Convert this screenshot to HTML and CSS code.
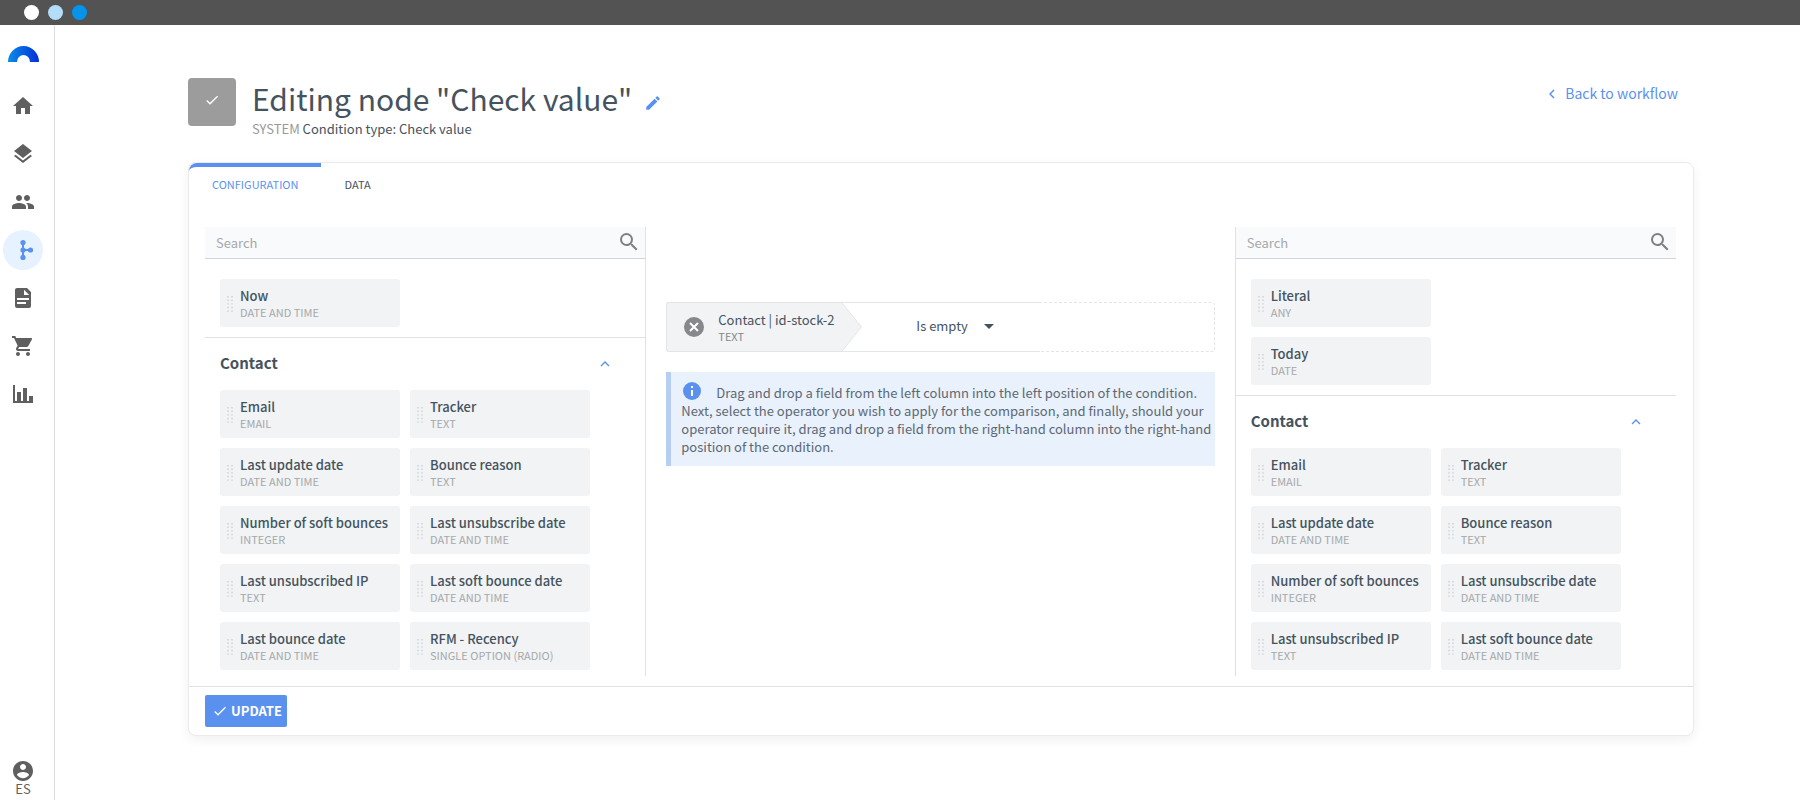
FILE: index.html
```html
<!DOCTYPE html>
<html lang="en">
<head>
<meta charset="utf-8">
<meta name="viewport" content="width=device-width, initial-scale=1">
<title>Editing node "Check value"</title>
<link rel="stylesheet" href="styles.css">
</head>
<body>
<svg class="sprite" aria-hidden="true">
  <symbol id="grip" viewBox="0 0 6 16">
    <path d="M1 0v16M5 0v16" fill="none" stroke="currentColor" stroke-width="1.4" stroke-dasharray="1.4 2.2"/>
  </symbol>
  <symbol id="search" viewBox="0 0 18 18">
    <path fill-rule="evenodd" d="M12.500 11h-.79l-.28-.27A6.470 6.470 0 0 0 13 6.500 6.500 6.500 0 1 0 6.500 13c1.610 0 3.090-.59 4.230-1.570l.27.28v.79l5 4.990L17.490 16l-4.990-5zm-6 0a4.500 4.500 0 1 1 0-9 4.500 4.500 0 0 1 0 9z"/>
  </symbol>
  <symbol id="up" viewBox="0 0 10 6">
    <path d="M1 5l4-4 4 4" fill="none" stroke="currentColor" stroke-width="1.400"/>
  </symbol>
  <symbol id="check" viewBox="0 0 24 24">
    <path d="M9 16.170L4.830 12l-1.420 1.410L9 19 21 7l-1.410-1.410z"/>
  </symbol>
</svg>

<header class="topbar">
  <span class="dot dot-white"></span>
  <span class="dot dot-light"></span>
  <span class="dot dot-blue"></span>
</header>

<div class="shell">
  <nav class="sidebar" aria-label="Main">
    <a class="logo" href="#" aria-label="Start">
      <svg width="31" height="16" viewBox="0 0 31 16">
        <defs><linearGradient id="arc"><stop offset="0" stop-color="#0b8ce9"/><stop offset="1" stop-color="#0330d8"/></linearGradient></defs>
        <path fill="url(#arc)" d="M0 16a15.500 16 0 0 1 31 0h-9a6.500 7 0 0 0-13 0z"/>
      </svg>
    </a>
    <a class="nav-item" href="#" aria-label="Home">
      <svg class="icon" viewBox="0 0 24 24"><path d="M10 20v-6h4v6h5v-8h3L12 3 2 12h3v8z"/></svg>
    </a>
    <a class="nav-item" href="#" aria-label="Layers">
      <svg class="icon" viewBox="0 0 24 24"><path d="M11.990 18.540l-7.370-5.730L3 14.070l9 7 9-7-1.630-1.270-7.380 5.740zM12 16l7.360-5.730L21 9l-9-7-9 7 1.630 1.270L12 16z"/></svg>
    </a>
    <a class="nav-item" href="#" aria-label="Contacts">
      <svg class="icon" viewBox="0 0 24 24"><path d="M16 11c1.660 0 2.990-1.340 2.990-3S17.660 5 16 5s-3 1.340-3 3 1.340 3 3 3zm-8 0c1.660 0 2.990-1.340 2.990-3S9.660 5 8 5 5 6.340 5 8s1.340 3 3 3zm0 2c-2.330 0-7 1.170-7 3.500V19h14v-2.500C15 14.170 10.330 13 8 13zm8 0c-.29 0-.62.02-.97.05 1.160.84 1.970 1.970 1.970 3.450V19h6v-2.500c0-2.330-4.670-3.500-7-3.500z"/></svg>
    </a>
    <a class="nav-item active" href="#" aria-label="Workflows" aria-current="page">
      <svg class="icon" viewBox="0 0 24 24"><path d="M12 4.500v15M12 12h7.500" fill="none" stroke="currentColor" stroke-width="2"/><circle cx="12" cy="4.600" r="2.600"/><circle cx="12" cy="12" r="2.600"/><circle cx="12" cy="19.400" r="2.600"/><circle cx="19.500" cy="12" r="2.600"/></svg>
    </a>
    <a class="nav-item" href="#" aria-label="Documents">
      <svg class="icon" viewBox="0 0 24 24"><path fill-rule="evenodd" d="M6 2h10l4 4v14a2 2 0 0 1-2 2H6a2 2 0 0 1-2-2V4c0-1.100.9-2 2-2zm7 1.800V9h5.200zM6 12v2h12v-2zm0 4v2h9v-2z"/></svg>
    </a>
    <a class="nav-item" href="#" aria-label="Shop">
      <svg class="icon" viewBox="0 0 24 24"><path d="M7 18c-1.100 0-1.990.9-1.990 2S5.900 22 7 22s2-.9 2-2-.9-2-2-2zM1 2v2h2l3.600 7.590-1.350 2.450c-.16.28-.25.61-.25.96 0 1.100.9 2 2 2h12v-2H7.420c-.14 0-.25-.11-.25-.25l.03-.12.9-1.630h7.450c.75 0 1.410-.41 1.750-1.030l3.580-6.490A1 1 0 0 0 20 4H5.210l-.94-2H1zm16 16c-1.100 0-1.990.9-1.990 2s.89 2 1.990 2 2-.9 2-2-.9-2-2-2z"/></svg>
    </a>
    <a class="nav-item" href="#" aria-label="Reports">
      <svg class="icon" viewBox="0 0 24 24"><path d="M2 3h2v16h2v-9h4v9h2V6h4v13h2v-5h4v7H2z"/></svg>
    </a>
    <a class="account" href="#">
      <svg class="icon" viewBox="0 0 24 24"><path d="M12 2C6.480 2 2 6.480 2 12s4.480 10 10 10 10-4.480 10-10S17.520 2 12 2zm0 3c1.660 0 3 1.340 3 3s-1.340 3-3 3-3-1.340-3-3 1.340-3 3-3zm0 14.200c-2.500 0-4.710-1.280-6-3.220.03-1.990 4-3.080 6-3.080 1.990 0 5.970 1.090 6 3.080-1.290 1.940-3.500 3.220-6 3.220z"/></svg>
      <span>ES</span>
    </a>
  </nav>

  <main class="page">
    <div class="page-head">
      <div class="node-badge"><svg width="16" height="16"><use href="#check"/></svg></div>
      <div class="heading">
        <div class="title-row">
          <h1>Editing node "Check value"</h1>
          <button class="icon-button edit" type="button" aria-label="Edit name">
            <svg width="18" height="18" viewBox="0 0 24 24"><path d="M3 17.250V21h3.750L17.810 9.940l-3.750-3.750L3 17.250zM20.710 7.040a1 1 0 0 0 0-1.410l-2.340-2.340a1 1 0 0 0-1.410 0l-1.830 1.830 3.750 3.750 1.830-1.830z"/></svg>
          </button>
        </div>
        <p class="subtitle"><span>SYSTEM</span> Condition type: Check value</p>
      </div>
      <a class="back" href="#">
        <svg width="6" height="10" viewBox="0 0 6 10"><path d="M5 1L1 5l4 4" fill="none" stroke="currentColor" stroke-width="1.500"/></svg>
        Back to workflow
      </a>
    </div>

    <section class="card">
      <div class="tabs" role="tablist">
        <button class="tab selected" type="button" role="tab" aria-selected="true">CONFIGURATION</button>
        <button class="tab" type="button" role="tab" aria-selected="false">DATA</button>
      </div>

      <div class="columns">
        <aside class="fields fields-left">
          <div class="search">
            <input type="search" placeholder="Search" aria-label="Search left fields">
            <button class="icon-button" type="button" aria-label="Search"><svg width="18" height="18"><use href="#search"/></svg></button>
          </div>
          <ul class="tiles stacked">
            <li class="tile" draggable="true"><svg class="grip"><use href="#grip"/></svg><span class="name">Now</span><span class="type">DATE AND TIME</span></li>
          </ul>
          <div class="group-head">
            <h2>Contact</h2>
            <button class="icon-button" type="button" aria-label="Collapse Contact"><svg width="10" height="6"><use href="#up"/></svg></button>
          </div>
          <ul class="tiles">
            <li class="tile" draggable="true"><svg class="grip"><use href="#grip"/></svg><span class="name">Email</span><span class="type">EMAIL</span></li>
            <li class="tile" draggable="true"><svg class="grip"><use href="#grip"/></svg><span class="name">Tracker</span><span class="type">TEXT</span></li>
            <li class="tile" draggable="true"><svg class="grip"><use href="#grip"/></svg><span class="name">Last update date</span><span class="type">DATE AND TIME</span></li>
            <li class="tile" draggable="true"><svg class="grip"><use href="#grip"/></svg><span class="name">Bounce reason</span><span class="type">TEXT</span></li>
            <li class="tile" draggable="true"><svg class="grip"><use href="#grip"/></svg><span class="name">Number of soft bounces</span><span class="type">INTEGER</span></li>
            <li class="tile" draggable="true"><svg class="grip"><use href="#grip"/></svg><span class="name">Last unsubscribe date</span><span class="type">DATE AND TIME</span></li>
            <li class="tile" draggable="true"><svg class="grip"><use href="#grip"/></svg><span class="name">Last unsubscribed IP</span><span class="type">TEXT</span></li>
            <li class="tile" draggable="true"><svg class="grip"><use href="#grip"/></svg><span class="name">Last soft bounce date</span><span class="type">DATE AND TIME</span></li>
            <li class="tile" draggable="true"><svg class="grip"><use href="#grip"/></svg><span class="name">Last bounce date</span><span class="type">DATE AND TIME</span></li>
            <li class="tile" draggable="true"><svg class="grip"><use href="#grip"/></svg><span class="name">RFM - Recency</span><span class="type">SINGLE OPTION (RADIO)</span></li>
          </ul>
        </aside>

        <div class="builder">
          <div class="condition">
            <div class="operand">
              <button class="icon-button remove" type="button" aria-label="Remove field">
                <svg width="20" height="20" viewBox="0 0 20 20"><circle cx="10" cy="10" r="10"/><path d="M6 6l8 8M14 6l-8 8" stroke="#fff" stroke-width="2" fill="none"/></svg>
              </button>
              <div class="operand-text"><span>Contact | id-stock-2</span><span class="type">TEXT</span></div>
            </div>
            <svg class="arrow" width="20" height="48" viewBox="0 0 20 48"><path d="M0 0l19.500 24L0 48z" fill="#f1f3f5"/><path d="M0 0l19.500 24L0 48" fill="none" stroke="#e3e6e8"/></svg>
            <div class="operator">
              <div class="select">
                <select aria-label="Operator"><option>Is empty</option></select>
                <svg width="10" height="5" viewBox="0 0 10 5"><path d="M0 0h10L5 5z"/></svg>
              </div>
            </div>
            <div class="drop"></div>
          </div>
          <p class="hint"><svg width="18" height="18" viewBox="0 0 18 18"><circle cx="9" cy="9" r="9" fill="#5b91ee"/><path d="M8 4h2v2H8zM8 8h2v6H8z" fill="#fff"/></svg>Drag and drop a field from the left column into the left position of the condition. Next, select the operator you wish to apply for the comparison, and finally, should your operator require it, drag and drop a field from the right-hand column into the right-hand position of the condition.</p>
        </div>

        <aside class="fields fields-right">
          <div class="search">
            <input type="search" placeholder="Search" aria-label="Search right fields">
            <button class="icon-button" type="button" aria-label="Search"><svg width="18" height="18"><use href="#search"/></svg></button>
          </div>
          <ul class="tiles stacked">
            <li class="tile" draggable="true"><svg class="grip"><use href="#grip"/></svg><span class="name">Literal</span><span class="type">ANY</span></li>
            <li class="tile" draggable="true"><svg class="grip"><use href="#grip"/></svg><span class="name">Today</span><span class="type">DATE</span></li>
          </ul>
          <div class="group-head">
            <h2>Contact</h2>
            <button class="icon-button" type="button" aria-label="Collapse Contact"><svg width="10" height="6"><use href="#up"/></svg></button>
          </div>
          <ul class="tiles">
            <li class="tile" draggable="true"><svg class="grip"><use href="#grip"/></svg><span class="name">Email</span><span class="type">EMAIL</span></li>
            <li class="tile" draggable="true"><svg class="grip"><use href="#grip"/></svg><span class="name">Tracker</span><span class="type">TEXT</span></li>
            <li class="tile" draggable="true"><svg class="grip"><use href="#grip"/></svg><span class="name">Last update date</span><span class="type">DATE AND TIME</span></li>
            <li class="tile" draggable="true"><svg class="grip"><use href="#grip"/></svg><span class="name">Bounce reason</span><span class="type">TEXT</span></li>
            <li class="tile" draggable="true"><svg class="grip"><use href="#grip"/></svg><span class="name">Number of soft bounces</span><span class="type">INTEGER</span></li>
            <li class="tile" draggable="true"><svg class="grip"><use href="#grip"/></svg><span class="name">Last unsubscribe date</span><span class="type">DATE AND TIME</span></li>
            <li class="tile" draggable="true"><svg class="grip"><use href="#grip"/></svg><span class="name">Last unsubscribed IP</span><span class="type">TEXT</span></li>
            <li class="tile" draggable="true"><svg class="grip"><use href="#grip"/></svg><span class="name">Last soft bounce date</span><span class="type">DATE AND TIME</span></li>
          </ul>
        </aside>
      </div>

      <footer class="card-foot">
        <button class="update" type="button"><svg width="16" height="16"><use href="#check"/></svg>UPDATE</button>
      </footer>
    </section>
  </main>
</div>
</body>
</html>
```

FILE: styles.css
```css
* {
  box-sizing: border-box;
}

body {
  margin: 0;
  min-height: 100vh;
  display: flex;
  flex-direction: column;
  background: #fff;
  color: #45535e;
  font: 13px/18px "Noto Sans CJK SC", "Noto Sans", sans-serif;
}

h1, h2, p, ul {
  margin: 0;
  padding: 0;
}

svg {
  display: block;
  fill: currentColor;
}

a {
  text-decoration: none;
}

button, input, select {
  font: inherit;
  color: inherit;
}

.sprite {
  display: none;
}

.icon-button {
  padding: 0;
  border: 0;
  background: none;
  cursor: pointer;
}

/* Window bar */
.topbar {
  display: flex;
  align-items: center;
  gap: 9px;
  height: 25px;
  padding-left: 24px;
  background: #535353;
}

.dot {
  width: 15px;
  height: 15px;
  border-radius: 50%;
}

.dot-white { background: #fff; }
.dot-light { background: #b3ddf8; }
.dot-blue { background: #0693ec; }

.shell {
  flex: 1;
  display: flex;
}

/* Sidebar */
.sidebar {
  flex: none;
  display: flex;
  flex-direction: column;
  gap: 8px;
  width: 55px;
  padding: 21px 0 5px 3px;
  border-right: 1px solid #dcdcdc;
}

.logo {
  padding: 0 5px 16px;
}

.nav-item {
  display: flex;
  align-items: center;
  justify-content: center;
  width: 40px;
  height: 40px;
  border-radius: 50%;
  color: #5f5f5f;
}

.nav-item.active {
  background: #e6f2ff;
  color: #5b91ee;
}

.icon {
  width: 24px;
  height: 24px;
}

.account {
  display: flex;
  flex-direction: column;
  align-items: center;
  width: 40px;
  margin-top: auto;
  color: #5f5f5f;
  line-height: 12px;
}

/* Page heading */
.page {
  flex: 1;
  min-width: 0;
  padding: 53px 106px 40px 133px;
}

.page-head {
  display: flex;
  align-items: flex-start;
  gap: 16px;
  padding-bottom: 24px;
}

.node-badge {
  display: flex;
  justify-content: center;
  width: 48px;
  height: 48px;
  padding-top: 14px;
  border-radius: 4px;
  background: #9c9c9c;
  color: #fff;
}

.heading {
  flex: 1;
}

.title-row {
  display: flex;
  align-items: flex-start;
  gap: 12px;
  height: 42px;
}

h1 {
  font-size: 30px;
  font-weight: 400;
  line-height: 40px;
}

.edit {
  padding-top: 16px;
  color: #5b91ee;
}

.subtitle span {
  color: #999;
}

.back {
  display: flex;
  align-items: center;
  gap: 10px;
  padding: 7px 16px 0 0;
  color: #5b91ee;
  font-size: 14px;
  line-height: 17px;
}

/* Card */
.card {
  border: 1px solid #ebebeb;
  border-radius: 8px;
  background: #fff;
  box-shadow: 0 4px 12px rgba(0, 0, 0, 0.06);
}

.tabs {
  display: flex;
  align-items: flex-start;
  height: 64px;
}

.tab {
  padding: 0 23px;
  border: 0;
  border-top: 4px solid transparent;
  background: none;
  font-size: 11px;
  line-height: 34px;
}

.tab.selected {
  border-top-color: #5b91ee;
  border-top-left-radius: 8px;
  color: #5b91ee;
}

.columns {
  display: grid;
  grid-template-columns: 3fr 4fr 3fr;
  padding: 0 17px 10px 16px;
}

.fields-left { border-right: 1px solid #dfe1e4; }
.fields-right { border-left: 1px solid #dfe1e4; }

.search {
  display: flex;
  align-items: center;
  height: 32px;
  padding: 0 7px 0 11px;
  border-bottom: 1px solid #d0d5db;
  background: #f9fafc;
}

.search input {
  flex: 1;
  min-width: 0;
  padding: 0;
  border: 0;
  outline: 0;
  background: none;
}

.search input::placeholder {
  color: #a5a8aa;
}

.search .icon-button {
  padding-bottom: 2px;
  color: #808080;
}

.tiles {
  display: grid;
  grid-template-columns: repeat(2, 180px);
  gap: 10px;
  padding: 0 15px 6px;
  list-style: none;
}

.tiles.stacked {
  grid-template-columns: 180px;
  padding: 20px 15px 10px;
  border-bottom: 1px solid #dfe1e4;
}

.tile {
  display: grid;
  grid-template: 16px 16px / 6px 1fr;
  column-gap: 7px;
  padding: 9px 7px 7px;
  border-radius: 3px;
  background: #f1f3f5;
  line-height: 16px;
  cursor: grab;
}

.grip {
  grid-row: 1 / 3;
  align-self: center;
  width: 6px;
  height: 16px;
  color: #cbd0d5;
}

.name {
  font-weight: 500;
}

.type {
  color: #a5a8aa;
  font-size: 11px;
  line-height: 16px;
}

.group-head {
  display: flex;
  align-items: center;
  justify-content: space-between;
  height: 52px;
  padding: 0 35px 0 15px;
}

.group-head .icon-button {
  color: #5b91ee;
}

h2 {
  font-size: 15px;
  font-weight: 700;
  line-height: 18px;
  padding-bottom: 2px;
}

/* Condition */
.builder {
  padding: 75px 20px 0;
}

.condition {
  display: flex;
  height: 50px;
  margin-bottom: 20px;
}

.operand {
  display: flex;
  align-items: center;
  gap: 14px;
  padding: 0 8px 0 17px;
  border: 1px solid #e3e6e8;
  border-right: 0;
  border-radius: 3px 0 0 3px;
  background: #f1f3f5;
}

.operand-text {
  display: grid;
  line-height: 17px;
}

.operand-text .type,
.remove {
  color: #85898c;
}

.arrow {
  box-sizing: content-box;
  flex: none;
  border: solid #e3e6e8;
  border-width: 1px 0;
}

.operator {
  flex: 1;
  display: flex;
  align-items: center;
  justify-content: center;
  padding: 0 0 2px 9px;
  border: solid #e3e6e8;
  border-width: 1px 0;
}

.select {
  position: relative;
}

.select select {
  padding: 0 26px 0 0;
  border: 0;
  outline: 0;
  background: none;
  appearance: none;
}

.select svg {
  position: absolute;
  top: 7px;
  right: 0;
  pointer-events: none;
}

.drop {
  flex: none;
  width: 32%;
  border: 1px dashed #e3e6e8;
  border-left: 0;
  border-radius: 0 3px 3px 0;
}

.hint {
  padding: 12px 0 10px 10px;
  border-left: 5px solid #b5cff3;
  background: #e9f1fc;
  color: #5d6873;
}

.hint svg {
  display: inline-block;
  margin: -7px 15px 0 2px;
  vertical-align: middle;
}

/* Card footer */
.card-foot {
  padding: 8px 16px;
  border-top: 1px solid #dfe1e4;
}

.update {
  display: flex;
  align-items: center;
  gap: 3px;
  height: 32px;
  padding: 0 5px 0 7px;
  border: 0;
  border-radius: 2px;
  background: #5b91ee;
  color: #fff;
  font-weight: 700;
}
```
